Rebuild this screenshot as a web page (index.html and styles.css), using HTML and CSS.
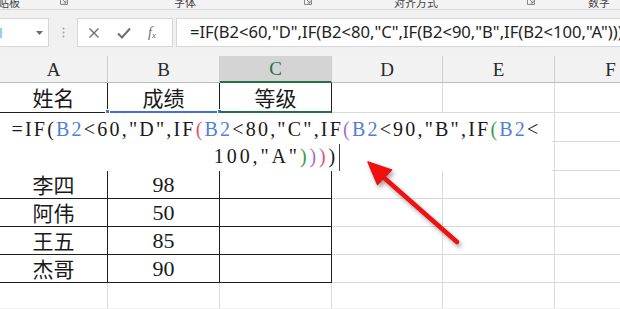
FILE: index.html
```html
<!DOCTYPE html>
<html lang="zh">
<head>
<meta charset="utf-8">
<link rel="stylesheet" href="styles.css">
</head>
<body>
<div class="app">
  <div class="ribbon">
    <span class="rlabel g1">贴板</span>
    <svg class="launch l1" width="8" height="8" viewBox="0 0 8 8"><path d="M0.5 0.5V7.5H7.5V0.5" fill="none" stroke="#8a8a8a"/><path d="M2.5 2.5L6 6M6 3.5V6H3.5" fill="none" stroke="#8a8a8a"/></svg>
    <span class="rlabel g2">字体</span>
    <svg class="launch l2" width="8" height="8" viewBox="0 0 8 8"><path d="M0.5 0.5V7.5H7.5V0.5" fill="none" stroke="#8a8a8a"/><path d="M2.5 2.5L6 6M6 3.5V6H3.5" fill="none" stroke="#8a8a8a"/></svg>
    <span class="rlabel g3">对齐方式</span>
    <svg class="launch l3" width="8" height="8" viewBox="0 0 8 8"><path d="M0.5 0.5V7.5H7.5V0.5" fill="none" stroke="#8a8a8a"/><path d="M2.5 2.5L6 6M6 3.5V6H3.5" fill="none" stroke="#8a8a8a"/></svg>
    <span class="rlabel g4">数字</span>
  </div>

  <div class="fbar">
    <div class="namebox">
      <span class="nbsel"></span>
      <svg class="dd" width="7" height="4" viewBox="0 0 7 4"><path d="M0 0H7L3.5 4Z" fill="#6b6b6b"/></svg>
    </div>
    <div class="dots">
      <svg width="3" height="11" viewBox="0 0 3 11"><circle cx="1.5" cy="1.5" r="1" fill="#a0a0a0"/><circle cx="1.5" cy="5.5" r="1" fill="#a0a0a0"/><circle cx="1.5" cy="9.5" r="1" fill="#a0a0a0"/></svg>
    </div>
    <div class="fnbox">
      <svg width="12" height="12" viewBox="0 0 12 12"><path d="M1.5 1.5L10.5 10.5M10.5 1.5L1.5 10.5" stroke="#6e6e6e" stroke-width="1.4" fill="none"/></svg>
      <svg width="14" height="12" viewBox="0 0 14 12"><path d="M1 6.5L5 10.5L13 1.5" stroke="#6e6e6e" stroke-width="2" fill="none"/></svg>
      <span class="fx">f<sub>x</sub></span>
    </div>
    <div class="finput">=IF(B2&lt;60,"D",IF(B2&lt;80,"C",IF(B2&lt;90,"B",IF(B2&lt;100,"A"))))</div>
  </div>

  <div class="sheet">
    <div class="grid">
      <div class="h">A</div><div class="h">B</div><div class="h hsel">C</div><div class="h">D</div><div class="h">E</div><div class="h">F</div>

      <div class="c t">姓名</div><div class="c t ref">成绩<i class="hd hl"></i><i class="hd hr"></i></div><div class="c t act">等级</div><div class="c"></div><div class="c"></div><div class="c"></div>

      <div class="c t"></div><div class="c t"></div><div class="c t"></div><div class="c"></div><div class="c"></div><div class="c"></div>
      <div class="c t"></div><div class="c t"></div><div class="c t"></div><div class="c"></div><div class="c"></div><div class="c"></div>

      <div class="c t">李四</div><div class="c t n">98</div><div class="c t"></div><div class="c"></div><div class="c"></div><div class="c"></div>
      <div class="c t">阿伟</div><div class="c t n">50</div><div class="c t"></div><div class="c"></div><div class="c"></div><div class="c"></div>
      <div class="c t">王五</div><div class="c t n">85</div><div class="c t"></div><div class="c"></div><div class="c"></div><div class="c"></div>
      <div class="c t">杰哥</div><div class="c t n">90</div><div class="c t"></div><div class="c"></div><div class="c"></div><div class="c"></div>

      <div class="c"></div><div class="c"></div><div class="c"></div><div class="c"></div><div class="c"></div><div class="c"></div>
    </div>

    <div class="edit"><span class="l1t">=IF<span class="p0">(</span><span class="r">B2</span>&lt;60,"D",IF<span class="p1">(</span><span class="r">B2</span>&lt;80,"C",IF<span class="p2">(</span><span class="r">B2</span>&lt;90,"B",IF<span class="p3">(</span><span class="r">B2</span>&lt;</span><br><span class="l2t">100,"A"<span class="p3">)</span><span class="p2">)</span><span class="p1">)</span><span class="p0">)</span></span><span class="caret"></span></div>
  </div>

  <svg class="arrow" width="620" height="309" viewBox="0 0 620 309">
    <g class="arrowg">
      <line x1="457" y1="242" x2="382" y2="176" stroke="#f01010" stroke-width="4.5" stroke-linecap="round"/>
      <path d="M368 162L391.5 170L377.5 184.5Z" fill="#f01010" stroke="#f01010" stroke-width="1.5" stroke-linejoin="round"/>
    </g>
  </svg>
</div>
</body>
</html>
```

FILE: styles.css
```css
* { box-sizing: border-box; }
html, body { margin: 0; padding: 0; }
body {
  width: 620px;
  height: 309px;
  overflow: hidden;
  background: #fff;
  font-family: "Noto Sans", "Noto Sans CJK SC", sans-serif;
}
.app {
  position: relative;
  width: 620px;
  height: 309px;
  overflow: hidden;
  background: #f0f0f0;
}

/* ribbon strip */
.ribbon {
  position: relative;
  height: 10px;
  display: flex;
  align-items: flex-start;
  overflow: hidden;
  border-bottom: 1px solid #d8d8d8;
  background: #f3f3f3;
}
.rlabel {
  font-family: "Noto Sans CJK SC", sans-serif;
  font-size: 11px;
  line-height: 12px;
  color: #444;
  margin-top: -4px;
  white-space: nowrap;
}
.launch { margin-top: -3px; flex: none; }
.g1 { margin-left: -2px; }
.l1 { margin-left: 40px; }
.g2 { margin-left: 106px; }
.l2 { margin-left: 108px; }
.g3 { margin-left: 82px; }
.l3 { margin-left: 89px; }
.g4 { margin-left: 53px; }

/* formula bar */
.fbar {
  height: 46px;
  display: flex;
  align-items: flex-start;
  padding-top: 8px;
}
.namebox {
  width: 50px;
  height: 29px;
  margin-left: -1px;
  background: #fff;
  border: 1px solid #d6d6d6;
  display: flex;
  align-items: center;
  justify-content: space-between;
  padding-right: 5px;
}
.nbsel {
  width: 2px;
  height: 10px;
  background: #8fd0f5;
}
.dots {
  width: 28px;
  height: 29px;
  display: flex;
  align-items: center;
  justify-content: center;
}
.fnbox {
  width: 96px;
  height: 29px;
  background: #fff;
  border: 1px solid #d6d6d6;
  display: flex;
  align-items: center;
  padding-left: 10px;
  gap: 17px;
}
.fx {
  font-family: "Liberation Serif", serif;
  font-style: italic;
  font-size: 14px;
  color: #6e6e6e;
  line-height: 1;
}
.fx sub { font-size: 9px; vertical-align: -1px; }
.finput {
  margin-left: 3px;
  flex: 1;
  height: 29px;
  background: #fff;
  border: 1px solid #d6d6d6;
  border-right: none;
  padding-left: 13px;
  font-family: "Noto Sans", sans-serif;
  font-size: 16.6px;
  line-height: 26px;
  color: #222;
  white-space: nowrap;
  overflow: hidden;
}

/* sheet */
.sheet {
  position: relative;
  height: 252px;
  background: #fff;
  overflow: hidden;
}
.grid {
  display: grid;
  grid-template-columns: 108px 112px 112px 111px 112px 112px;
  grid-template-rows: 27px 30px 29px 29px 28px 28px 28px 28px 28px;
}
.h {
  background: #f2f2f2;
  border-right: 1px solid #cdcdcd;
  border-bottom: 1px solid #bdbdbd;
  font-family: "Liberation Serif", serif;
  font-size: 19px;
  color: #2b2b2b;
  display: flex;
  align-items: center;
  justify-content: center;
  padding-top: 1px;
}
.hsel {
  background: #d4d4d4;
  color: #217346;
  border-bottom: 2px solid #217346;
}
.c {
  position: relative;
  border-right: 1px solid #dadada;
  border-bottom: 1px solid #dadada;
  display: flex;
  align-items: center;
  justify-content: center;
  font-family: "Noto Sans CJK SC", sans-serif;
  font-size: 21px;
  color: #1a1a1a;
  line-height: 1;
}
.c.t {
  border-right-color: #1e1e1e;
  border-bottom-color: #1e1e1e;
}
.c.n {
  font-family: "Liberation Serif", serif;
  font-size: 22px;
}
.c.ref { border-bottom: 2px solid #3f74d6; }
.c.act { border-bottom: 2px solid #217346; }
.hd {
  position: absolute;
  bottom: -3px;
  width: 5px;
  height: 5px;
  background: #3f74d6;
  border: 1px solid #fff;
}
.hl { left: -3px; }
.hr { right: -3px; }

/* in-cell edit overlay */
.edit {
  position: absolute;
  left: 0;
  top: 57px;
  width: 552px;
  height: 58px;
  background: #fff;
  padding-top: 3px;
  font-family: "Liberation Serif", serif;
  font-size: 20px;
  letter-spacing: 2.2px;
  line-height: 27px;
  color: #1a1a1a;
  text-align: center;
  white-space: nowrap;
}
.l2t { letter-spacing: 2.9px; }
.r { color: #4f80d8; }
.p0 { color: #1a1a1a; }
.p1 { color: #e4507a; }
.p2 { color: #a06ed8; }
.p3 { color: #3a9c44; }
.caret {
  display: inline-block;
  width: 1px;
  height: 27px;
  background: #444;
  vertical-align: -8px;
  margin-left: 1px;
  margin-right: -2px;
}

.arrow {
  position: absolute;
  left: 0;
  top: 0;
  pointer-events: none;
}
.arrowg { filter: drop-shadow(2px 3px 2px rgba(0,0,0,0.35)); }
```
